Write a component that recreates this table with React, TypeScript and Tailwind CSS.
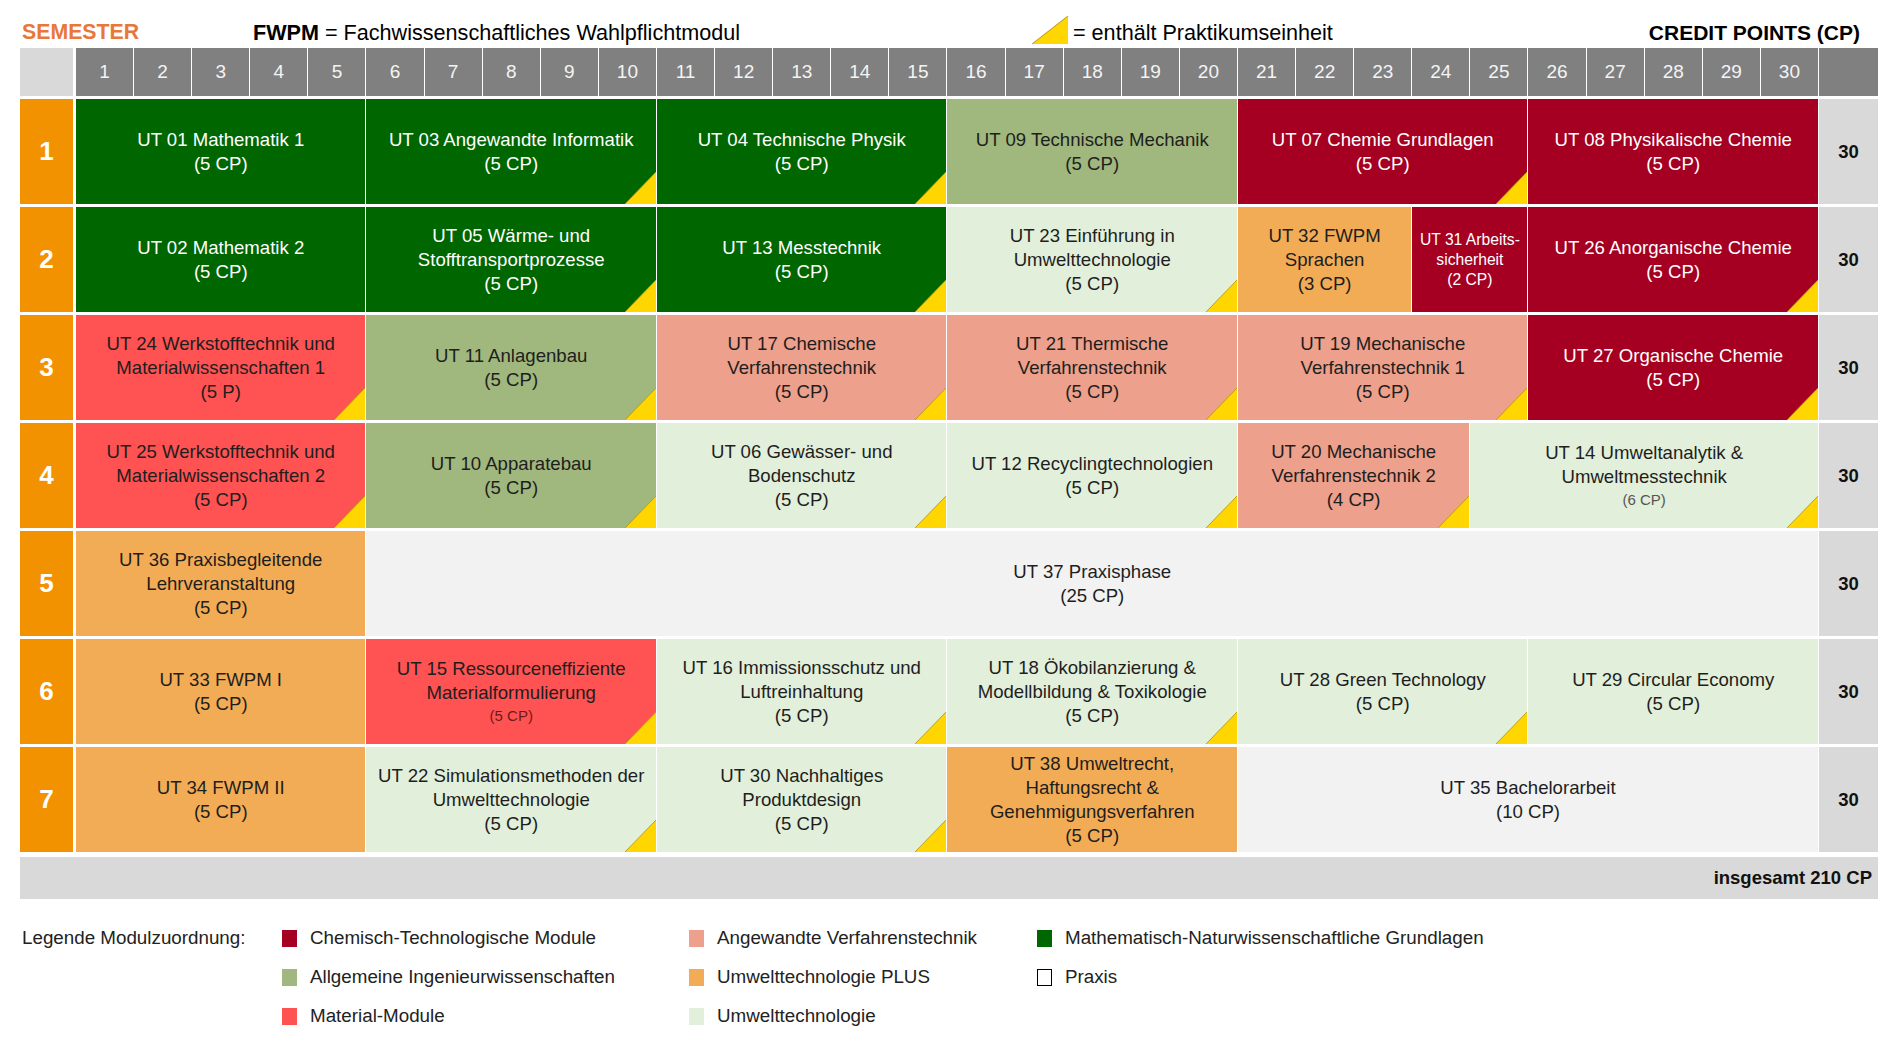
type Mod = {
  lines: string[];
  small?: string;
  smallColor?: string;
  c: string;
  span: string;
  tri?: boolean;
  size?: string;
};

const C = {
  green: "bg-[#006600] text-white",
  olive: "bg-[#a0b77d] text-[#1e1e1e]",
  chem: "bg-[#a50021] text-white",
  salmon: "bg-[#eda08b] text-[#1e1e1e]",
  light: "bg-[#e2efda] text-[#1e1e1e]",
  plus: "bg-[#f3ac56] text-[#1e1e1e]",
  red: "bg-[#ff5252] text-[#1e1e1e]",
  praxis: "bg-[#f2f2f2] text-[#1e1e1e]",
};

const rows: Mod[][] = [
  [
    { lines: ["UT 01 Mathematik 1", "(5 CP)"], c: C.green, span: "col-span-5" },
    { lines: ["UT 03 Angewandte Informatik", "(5 CP)"], c: C.green, span: "col-span-5", tri: true },
    { lines: ["UT 04 Technische Physik", "(5 CP)"], c: C.green, span: "col-span-5", tri: true },
    { lines: ["UT 09 Technische Mechanik", "(5 CP)"], c: C.olive, span: "col-span-5" },
    { lines: ["UT 07 Chemie Grundlagen", "(5 CP)"], c: C.chem, span: "col-span-5", tri: true },
    { lines: ["UT 08 Physikalische Chemie", "(5 CP)"], c: C.chem, span: "col-span-5" },
  ],
  [
    { lines: ["UT 02 Mathematik 2", "(5 CP)"], c: C.green, span: "col-span-5" },
    { lines: ["UT 05 Wärme- und", "Stofftransportprozesse", "(5 CP)"], c: C.green, span: "col-span-5", tri: true },
    { lines: ["UT 13 Messtechnik", "(5 CP)"], c: C.green, span: "col-span-5", tri: true },
    { lines: ["UT 23 Einführung in", "Umwelttechnologie", "(5 CP)"], c: C.light, span: "col-span-5", tri: true },
    { lines: ["UT 32 FWPM", "Sprachen", "(3 CP)"], c: C.plus, span: "col-span-3" },
    { lines: ["UT 31 Arbeits-", "sicherheit", "(2 CP)"], c: C.chem, span: "col-span-2", size: "text-[15.7px] leading-[20px]" },
    { lines: ["UT 26 Anorganische Chemie", "(5 CP)"], c: C.chem, span: "col-span-5", tri: true },
  ],
  [
    { lines: ["UT 24 Werkstofftechnik und", "Materialwissenschaften 1", "(5 P)"], c: C.red, span: "col-span-5", tri: true },
    { lines: ["UT 11 Anlagenbau", "(5 CP)"], c: C.olive, span: "col-span-5", tri: true },
    { lines: ["UT 17 Chemische", "Verfahrenstechnik", "(5 CP)"], c: C.salmon, span: "col-span-5", tri: true },
    { lines: ["UT 21 Thermische", "Verfahrenstechnik", "(5 CP)"], c: C.salmon, span: "col-span-5", tri: true },
    { lines: ["UT 19 Mechanische", "Verfahrenstechnik 1", "(5 CP)"], c: C.salmon, span: "col-span-5", tri: true },
    { lines: ["UT 27 Organische Chemie", "(5 CP)"], c: C.chem, span: "col-span-5", tri: true },
  ],
  [
    { lines: ["UT 25 Werkstofftechnik und", "Materialwissenschaften 2", "(5 CP)"], c: C.red, span: "col-span-5", tri: true },
    { lines: ["UT 10 Apparatebau", "(5 CP)"], c: C.olive, span: "col-span-5", tri: true },
    { lines: ["UT 06 Gewässer- und", "Bodenschutz", "(5 CP)"], c: C.light, span: "col-span-5", tri: true },
    { lines: ["UT 12 Recyclingtechnologien", "(5 CP)"], c: C.light, span: "col-span-5", tri: true },
    { lines: ["UT 20 Mechanische", "Verfahrenstechnik 2", "(4 CP)"], c: C.salmon, span: "col-span-4", tri: true },
    { lines: ["UT 14 Umweltanalytik &", "Umweltmesstechnik"], small: "(6 CP)", c: C.light, span: "col-span-6", tri: true },
  ],
  [
    { lines: ["UT 36 Praxisbegleitende", "Lehrveranstaltung", "(5 CP)"], c: C.plus, span: "col-span-5" },
    { lines: ["UT 37 Praxisphase", "(25 CP)"], c: C.praxis, span: "col-span-25" },
  ],
  [
    { lines: ["UT 33 FWPM I", "(5 CP)"], c: C.plus, span: "col-span-5" },
    {
      lines: ["UT 15 Ressourceneffiziente", "Materialformulierung"],
      small: "(5 CP)",
      smallColor: "text-[#6e1a1a]",
      c: C.red,
      span: "col-span-5",
      tri: true,
    },
    { lines: ["UT 16 Immissionsschutz und", "Luftreinhaltung", "(5 CP)"], c: C.light, span: "col-span-5", tri: true },
    { lines: ["UT 18 Ökobilanzierung &", "Modellbildung & Toxikologie", "(5 CP)"], c: C.light, span: "col-span-5", tri: true },
    { lines: ["UT 28 Green Technology", "(5 CP)"], c: C.light, span: "col-span-5", tri: true },
    { lines: ["UT 29 Circular Economy", "(5 CP)"], c: C.light, span: "col-span-5" },
  ],
  [
    { lines: ["UT 34 FWPM II", "(5 CP)"], c: C.plus, span: "col-span-5" },
    { lines: ["UT 22 Simulationsmethoden der", "Umwelttechnologie", "(5 CP)"], c: C.light, span: "col-span-5", tri: true },
    { lines: ["UT 30 Nachhaltiges", "Produktdesign", "(5 CP)"], c: C.light, span: "col-span-5", tri: true },
    { lines: ["UT 38 Umweltrecht,", "Haftungsrecht &", "Genehmigungsverfahren", "(5 CP)"], c: C.plus, span: "col-span-5" },
    { lines: ["UT 35 Bachelorarbeit", "(10 CP)"], c: C.praxis, span: "col-span-10" },
  ],
];

const legend = [
  [
    { label: "Chemisch-Technologische Module", sw: "bg-[#a50021]" },
    { label: "Angewandte Verfahrenstechnik", sw: "bg-[#eda08b]" },
    { label: "Mathematisch-Naturwissenschaftliche Grundlagen", sw: "bg-[#006600]" },
  ],
  [
    { label: "Allgemeine Ingenieurwissenschaften", sw: "bg-[#a0b77d]" },
    { label: "Umwelttechnologie PLUS", sw: "bg-[#f3ac56]" },
    { label: "Praxis", sw: "bg-white border border-black" },
  ],
  [
    { label: "Material-Module", sw: "bg-[#ff5252]" },
    { label: "Umwelttechnologie", sw: "bg-[#e2efda]" },
  ],
];

function Tri({ className = "absolute right-0 bottom-0 w-[31px] h-[32px]" }: { className?: string }) {
  return (
    <svg viewBox="0 0 31 32" className={className} preserveAspectRatio="none">
      <polygon points="31,0 31,32 0,32" fill="#ffd600" />
      <line x1="0" y1="32" x2="31" y2="0" stroke="#b99a10" strokeWidth="0.9" />
    </svg>
  );
}

function Cell({ m }: { m: Mod }) {
  return (
    <div
      className={`relative flex flex-col items-center justify-center text-center ${m.c} ${m.span} ${
        m.size ?? "text-[18.6px] leading-[24px]"
      }`}
    >
      {m.lines.map((l) => (
        <span key={l} className="whitespace-nowrap">
          {l}
        </span>
      ))}
      {m.small && (
        <span className={`text-[15px] leading-[21px] ${m.smallColor ?? "text-[#555]"}`}>{m.small}</span>
      )}
      {m.tri && <Tri />}
    </div>
  );
}

export default function App() {
  const cols = Array.from({ length: 30 }, (_, i) => i + 1);
  return (
    <div className="w-[1901px] h-[1041px] overflow-hidden bg-white font-['Liberation_Sans',Arial,sans-serif] text-[#1e1e1e]">
      {/* title line */}
      <div className="flex items-end h-[48px] pl-[22px] pr-[41px] pb-[5px] text-[21.6px] leading-[21px]">
        <div className="w-[231px] font-bold text-[21.3px] text-[#e9773a]">SEMESTER</div>
        <div className="w-[779px] text-black">
          <b>FWPM</b> = Fachwissenschaftliches Wahlpflichtmodul
        </div>
        <Tri className="w-[36px] h-[28px] mr-[5px] mb-[-1px]" />
        <div className="text-black">= enthält Praktikumseinheit</div>
        <div className="ml-auto font-bold text-[21px] text-black">CREDIT POINTS (CP)</div>
      </div>

      {/* plan table */}
      <div className="ml-[20px] w-[1858px] grid grid-cols-[55px_repeat(30,minmax(0,1fr))_59px] grid-rows-[48px_repeat(7,105px)] gap-x-px gap-y-[3px]">
        <div className="w-[53px] bg-[#d9d9d9]" />
        {cols.map((n) => (
          <div key={n} className="bg-[#808080] text-[#f4f4f4] text-[19px] flex items-center justify-center">
            {n}
          </div>
        ))}
        <div className="bg-[#808080]" />

        {rows.map((r, i) => (
          <div key={i} className="contents">
            <div className="w-[53px] bg-[#f39200] text-white font-bold text-[26px] flex items-center justify-center">
              {i + 1}
            </div>
            {r.map((m) => (
              <Cell key={m.lines[0]} m={m} />
            ))}
            <div className="bg-[#d9d9d9] font-bold text-[18.5px] text-[#111] flex items-center justify-center">30</div>
          </div>
        ))}
      </div>

      <div className="ml-[20px] mt-[5px] w-[1858px] h-[42px] bg-[#d9d9d9] flex items-center justify-end pr-[6px] font-bold text-[18.5px] text-[#111]">
        insgesamt 210 CP
      </div>

      {/* legend */}
      <div className="mt-[27px] pl-[22px] flex flex-col gap-[15px] text-[18.8px] leading-[24px] text-[#222]">
        {legend.map((row, i) => (
          <div key={i} className="flex items-center h-[24px]">
            <div className="w-[260px]">{i === 0 ? "Legende Modulzuordnung:" : ""}</div>
            {row.map((it, j) => (
              <div key={it.label} className={`flex items-center ${j === 0 ? "w-[407px]" : j === 1 ? "w-[348px]" : ""}`}>
                <span className={`w-[15px] h-[17px] mr-[13px] ${it.sw}`} />
                <span>{it.label}</span>
              </div>
            ))}
          </div>
        ))}
      </div>
    </div>
  );
}
